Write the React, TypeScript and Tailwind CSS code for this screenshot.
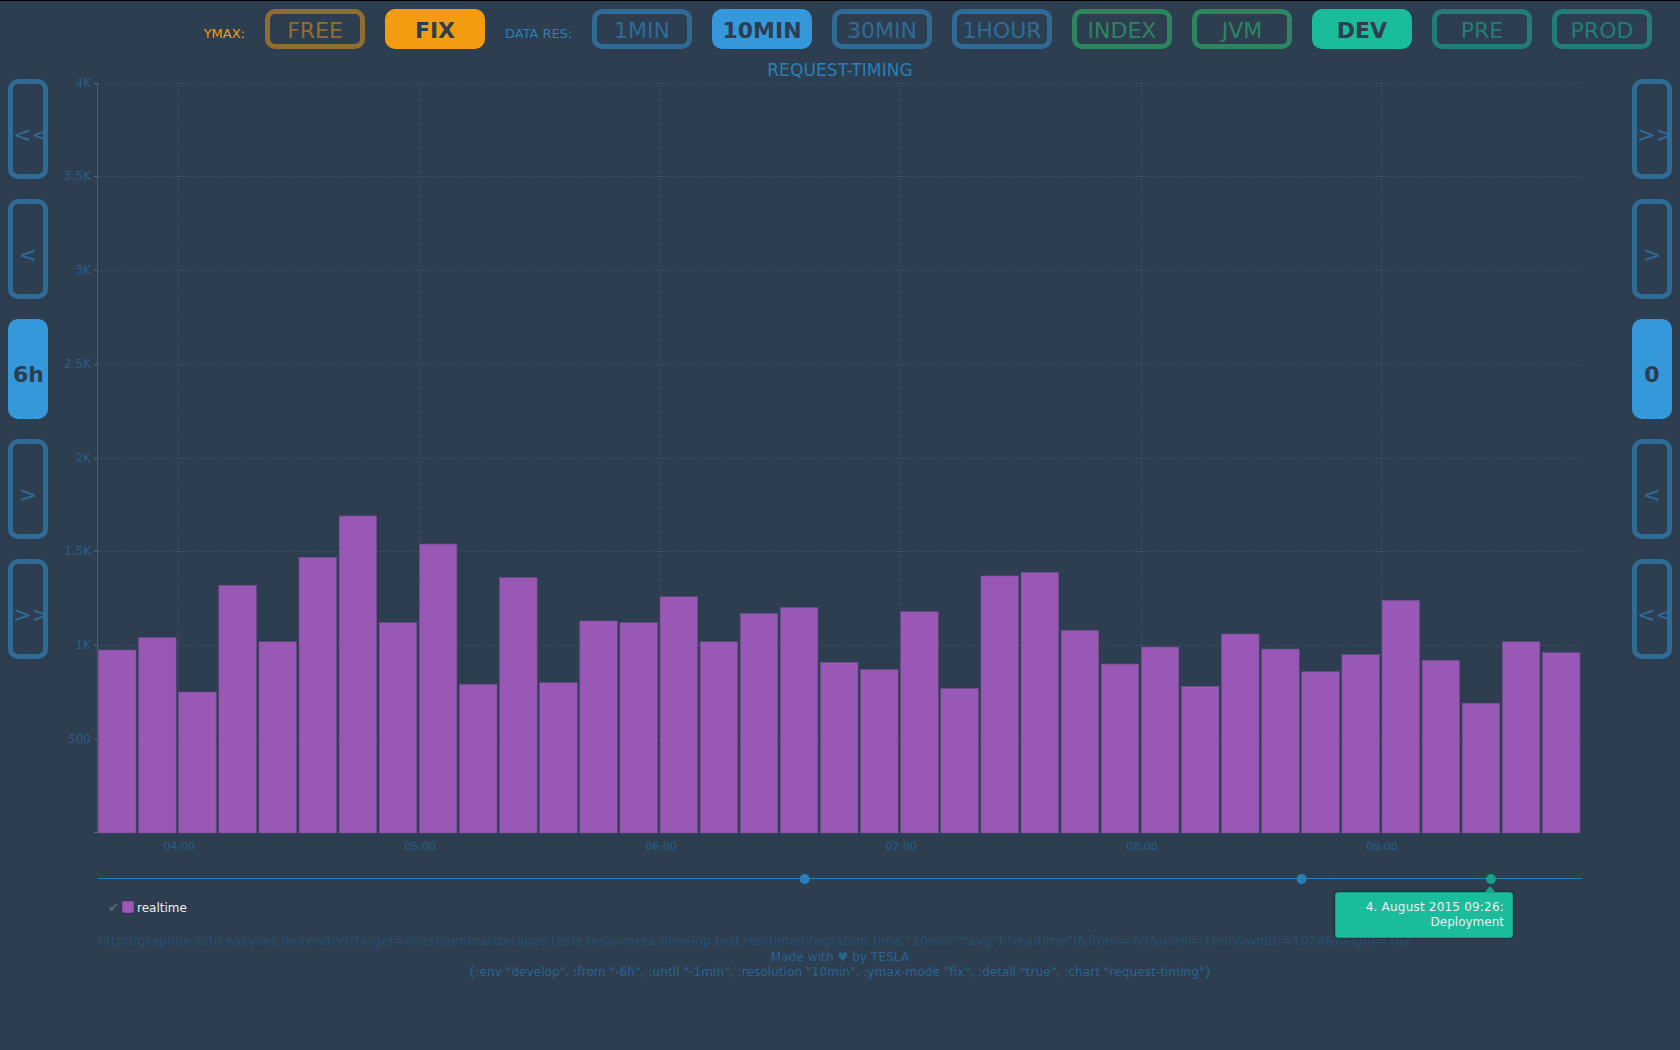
const ymaxModes = [
  { label: "FREE", active: false },
  { label: "FIX", active: true },
];
const resolutions = [
  { label: "1MIN", active: false },
  { label: "10MIN", active: true },
  { label: "30MIN", active: false },
  { label: "1HOUR", active: false },
];
const sections = [
  { label: "INDEX", tone: "border-[#2ecc71] text-[#2ecc71]", active: false },
  { label: "JVM", tone: "border-[#2ecc71] text-[#2ecc71]", active: false },
  { label: "DEV", tone: "border-[#1abc9c] bg-[#1abc9c] text-[#2c3e50]", active: true },
  { label: "PRE", tone: "border-[#1abc9c] text-[#1abc9c]", active: false },
  { label: "PROD", tone: "border-[#1abc9c] text-[#1abc9c]", active: false },
];

const leftNav = ["<<", "<", "6h", ">", ">>"];
const rightNav = [">>", ">", "0", "<", "<<"];

const values = [
  976, 1042, 752, 1321, 1020, 1470, 1691, 1122, 1541, 793, 1362, 802, 1131, 1122, 1260, 1020, 1171,
  1202, 910, 871, 1180, 771, 1371, 1390, 1081, 901, 992, 782, 1061, 981, 860, 951, 1241, 921, 692,
  1020, 962,
];

const yTicks = [
  { label: "4K", y: 83.5 },
  { label: "3.5K", y: 176.5 },
  { label: "3K", y: 270.5 },
  { label: "2.5K", y: 364.5 },
  { label: "2K", y: 458.5 },
  { label: "1.5K", y: 551.5 },
  { label: "1K", y: 645.5 },
  { label: "500", y: 739.5 },
];
const xTicks = [
  { label: "04:00", x: 178.5 },
  { label: "05:00", x: 419.5 },
  { label: "06:00", x: 660.5 },
  { label: "07:00", x: 900.5 },
  { label: "08:00", x: 1141.5 },
  { label: "09:00", x: 1381.5 },
];

const url =
  'http://graphite.otto.easynet.de/render/?target=alias(summarize(apps.tesla.tesla-meta.develop.test.realtimeintegration.time,"10min","avg"),"realtime")&from=-6h&until=-1min&width=1024&height=762';

const TopButton = ({ label, active, tone }: { label: string; active: boolean; tone: string }) => (
  <button
    className={`h-10 w-[100px] shrink-0 rounded-[10px] border-[5px] pb-0.5 text-[22px] ${tone} ${
      active ? "font-bold" : "opacity-50"
    }`}
  >
    {label}
  </button>
);

const SideButton = ({ label }: { label: string }) => {
  const active = label === "6h" || label === "0";
  return (
    <button
      className={`h-[100px] w-10 rounded-[10px] border-[5px] border-[#3498db] pt-[10px] text-[22px] ${
        active ? "bg-[#3498db] font-bold text-[#2c3e50]" : "text-[#3498db] opacity-50"
      }`}
    >
      {label}
    </button>
  );
};

const Chart = () => (
  <svg width={1584} height={810} viewBox="48 79 1584 810" className="shrink-0 overflow-visible">
    {yTicks.map((t) => (
      <g key={t.label}>
        <line x1={98} x2={1581} y1={t.y} y2={t.y} stroke="#4a5a6c" strokeDasharray="1 2" />
        <line x1={94} x2={98} y1={t.y} y2={t.y} stroke="#56657a" />
        <text x={91} y={t.y + 3.5} textAnchor="end" fontSize={12} fill="#2b5f85">
          {t.label}
        </text>
      </g>
    ))}
    {xTicks.map((t) => (
      <g key={t.label}>
        <line x1={t.x} x2={t.x} y1={83} y2={833} stroke="#4a5a6c" strokeDasharray="1 2" />
        <text x={t.x + 0.5} y={850} textAnchor="middle" fontSize={11} fill="#2b5f85">
          {t.label}
        </text>
      </g>
    ))}
    <line x1={97.5} x2={97.5} y1={83} y2={833} stroke="#4d5c6e" />
    <line x1={94} x2={98} y1={832.5} y2={832.5} stroke="#56657a" />
    {values.map((v, i) => {
      const h = (v * 750) / 4000;
      return (
        <rect
          key={i}
          x={98.5 + i * 40.11}
          y={833 - h}
          width={37.5}
          height={h}
          fill="#9b59b6"
          fillOpacity={0.99}
          stroke="#6d4f8c"
          strokeWidth={0.6}
        />
      );
    })}
    <line x1={98} x2={1582} y1={878.5} y2={878.5} stroke="#2980b9" />
    <circle cx={804.7} cy={879} r={5} fill="#2980b9" />
    <circle cx={1301.7} cy={879} r={5} fill="#2980b9" />
    <circle cx={1491} cy={879} r={5} fill="#16a085" />
  </svg>
);

export default function App() {
  return (
    <div className="relative min-h-[1050px] border-t border-black bg-[#2c3e50] font-['DejaVu_Sans',sans-serif]">
      <header className="flex items-center justify-end gap-5 pt-2 pr-7">
        <span className="pt-[10px] text-[13px] text-[#f39c12]">YMAX:</span>
        {ymaxModes.map((m) => (
          <TopButton
            key={m.label}
            label={m.label}
            active={m.active}
            tone={m.active ? "border-[#f39c12] bg-[#f39c12] text-[#2c3e50]" : "border-[#f39c12] text-[#f39c12]"}
          />
        ))}
        <span className="w-[67px] pt-[10px] text-[13px] whitespace-nowrap text-[#2980b9]">DATA RES:</span>
        {resolutions.map((r) => (
          <TopButton
            key={r.label}
            label={r.label}
            active={r.active}
            tone={r.active ? "border-[#3498db] bg-[#3498db] text-[#2c3e50]" : "border-[#3498db] text-[#3498db]"}
          />
        ))}
        {sections.map((s) => (
          <TopButton key={s.label} label={s.label} active={s.active} tone={s.tone} />
        ))}
      </header>

      <h1 className="h-[30px] pt-[10px] text-center text-[17px] leading-[22px] tracking-[0.1px] text-[#2980b9]">
        REQUEST-TIMING
      </h1>

      <main className="flex justify-between px-2">
        <div className="flex flex-col gap-5">
          {leftNav.map((l) => (
            <SideButton key={l} label={l} />
          ))}
        </div>
        <Chart />
        <div className="flex flex-col gap-5">
          {rightNav.map((l) => (
            <SideButton key={l} label={l} />
          ))}
        </div>
      </main>

      <div className="mt-[10px] flex h-[18px] items-center pl-[108px] text-[12px]">
        <span className="w-[14px] text-[13px] text-[#5b6978]">✔</span>
        <span className="-mt-0.5 h-3 w-3 rounded-[2px] border border-[#8e44ad] bg-[#9b59b6]" />
        <span className="ml-[3px] text-[#ecf0f1]">realtime</span>
      </div>

      <p className="mt-[16px] pl-[98px] text-[13px] leading-[15px] tracking-[-0.06px] whitespace-nowrap text-[#28506f]">
        {url}
      </p>
      <footer className="mt-[2px] text-center text-[12px] leading-[15px] tracking-[0.09px] text-[#2a6490]">
        <p>Made with ♥ by TESLA</p>
        <p>
          {'{:env "develop", :from "-6h", :until "-1min", :resolution "10min", :ymax-mode "fix", :detail "true", :chart "request-timing"}'}
        </p>
      </footer>

      <div className="absolute top-[891px] left-[1335px] w-[178px] rounded-[3px] border border-[#16a085] bg-[#1abc9c] py-[7px] pr-2 text-right text-[12px] leading-[15px] text-[#ecf0f1] shadow-[0_0_3px_rgba(0,0,0,0.5)]">
        <span className="absolute -top-[7px] left-[149px] h-0 w-0 border-x-[5px] border-b-[6px] border-x-transparent border-b-[#16a085]" />
        <p className="tracking-[0.2px]">4. August 2015 09:26:</p>
        <p>Deployment</p>
      </div>
    </div>
  );
}
